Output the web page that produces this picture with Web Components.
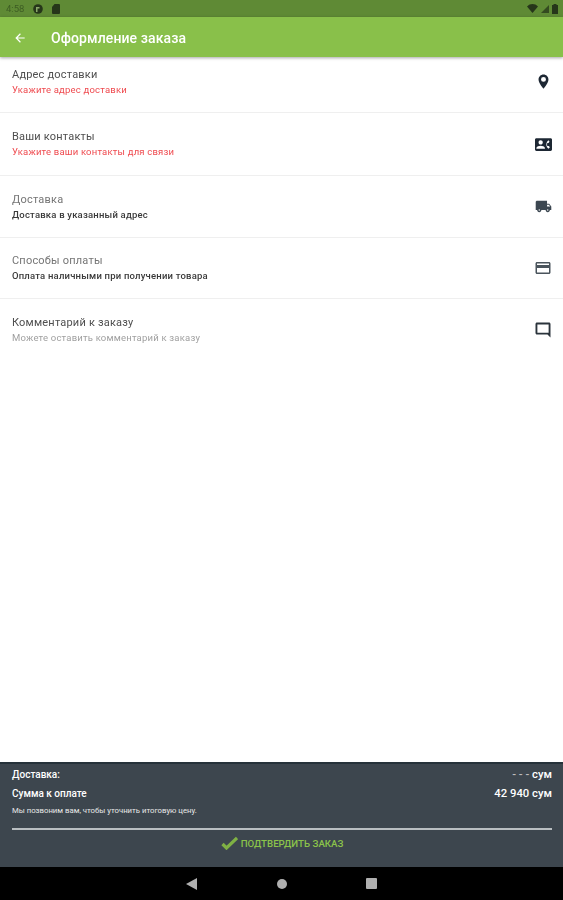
<!DOCTYPE html>
<html lang="ru">
<head>
<meta charset="utf-8">
<title>Оформление заказа</title>
<style>
html,body{margin:0;height:100%;}
body{font-family:Roboto,"Liberation Sans",sans-serif;background:#fff;}
order-screen{height:900px;filter:blur(.5px);}
</style>
</head>
<body>
<order-screen>
  <status-bar slot="status"></status-bar>
  <app-bar slot="bar" title="Оформление заказа"></app-bar>
  <order-row title="Адрес доставки" note="Укажите адрес доставки" kind="error" h="56" first>
    <svg viewBox="0 0 24 24" width="17" height="17"><path fill="#1d2733" d="M12 2C8.100 2 5 5.100 5 9c0 5.200 7 13 7 13s7-7.800 7-13c0-3.900-3.100-7-7-7zm0 10.500a3.500 3.500 0 1 1 0-7 3.500 3.500 0 0 1 0 7z"/></svg>
  </order-row>
  <order-row title="Ваши контакты" note="Укажите ваши контакты для связи" kind="error" h="63">
    <svg viewBox="0 0 24 24" width="17" height="17"><path fill="#1d2733" d="M22 3H2C.9 3 0 3.900 0 5v14c0 1.100.9 2 2 2h20c1.100 0 2-.9 2-2V5c0-1.100-.9-2-2-2zM8 6c1.700 0 3 1.300 3 3s-1.300 3-3 3-3-1.300-3-3 1.300-3 3-3zm6 12H2v-1c0-2 4-3.100 6-3.100s6 1.100 6 3.100v1zm3.900-4h1.600L21 16l-2 2c-1.300-1-2.300-2.400-2.700-4-.2-.6-.3-1.300-.3-2s.1-1.400.3-2c.4-1.600 1.400-3 2.700-4l1.500 2-1.500 2h-1.600c-.2.600-.4 1.300-.4 2s.2 1.400.4 2z"/></svg>
  </order-row>
  <order-row title="Доставка" note="Доставка в указанный адрес" kind="plain" h="62" faded>
    <svg viewBox="0 0 24 24" width="17" height="17"><path fill="#3b4650" d="M20 8h-3V4H3c-1.100 0-2 .9-2 2v11h2c0 1.700 1.300 3 3 3s3-1.300 3-3h6c0 1.700 1.300 3 3 3s3-1.300 3-3h2v-5l-3-4zM6 18a1 1 0 1 1 0-2 1 1 0 0 1 0 2zm13.500-8.500 2 2.500H17V9.500h2.500zM18 18a1 1 0 1 1 0-2 1 1 0 0 1 0 2z"/></svg>
  </order-row>
  <order-row title="Способы оплаты" note="Оплата наличными при получении товара" kind="plain" h="61" faded>
    <svg viewBox="0 0 24 24" width="18" height="18"><path fill="#4a545c" d="M20 4H4c-1.100 0-2 .9-2 2v12c0 1.100.9 2 2 2h16c1.100 0 2-.9 2-2V6c0-1.100-.9-2-2-2zm0 14H4v-6h16v6zm0-10H4V6h16v2z"/></svg>
  </order-row>
  <order-row title="Комментарий к заказу" note="Можете оставить комментарий к заказу" kind="hint" h="62" last>
    <svg viewBox="0 0 24 24" width="18" height="18"><path fill="#2b343c" d="M21.990 4c0-1.100-.89-2-1.990-2H4c-1.100 0-2 .9-2 2v12c0 1.100.9 2 2 2h14l4 4-.01-18zM19.500 4.500v11.100L18.830 15.500H4.500v-11h15z"/></svg>
  </order-row>
  <order-summary slot="summary"></order-summary>
  <nav-bar slot="nav"></nav-bar>
</order-screen>

<script>
class OrderScreen extends HTMLElement{
  constructor(){
    super();
    this.attachShadow({mode:"open"}).innerHTML=`
    <style>
    :host{display:flex;flex-direction:column;}
    main{flex:1;display:flex;flex-direction:column;min-height:0;}
    </style>
    <slot name="status"></slot>
    <slot name="bar"></slot>
    <main><slot></slot></main>
    <slot name="summary"></slot>
    <slot name="nav"></slot>`;
  }
}

class StatusBar extends HTMLElement{
  constructor(){
    super();
    this.attachShadow({mode:"open"}).innerHTML=`
    <style>
    :host{display:flex;align-items:center;height:17px;background:#5f8a35;padding:0 5px 0 6px;color:#2f4a1c;font-size:9.500px;}
    .time{margin-right:9px;opacity:.7;}
    .left{display:flex;align-items:center;gap:0;flex:1;}
    .left svg{margin-right:9px;}
    .right{display:flex;align-items:center;gap:3px;}
    svg{display:block;}
    </style>
    <div class="left">
      <span class="time">4:58</span>
      <svg width="10" height="10" viewBox="0 0 10 10"><circle cx="5" cy="5" r="4.800" fill="#26361a"/><path d="M3 8V3h3.500v1.500H4.500V8z" fill="#8aa86a"/></svg>
      <svg width="8" height="10" viewBox="0 0 8 10"><path d="M2.500 0H7a1 1 0 0 1 1 1v8a1 1 0 0 1-1 1H1a1 1 0 0 1-1-1V3z" fill="#26361a"/></svg>
    </div>
    <div class="right">
      <svg width="11" height="9" viewBox="0 0 11 9"><path d="M0 2.500C3-.8 8-.8 11 2.500L5.500 9z" fill="#26361a"/></svg>
      <svg width="8" height="8" viewBox="0 0 8 8"><path d="M8 0v8H0z" fill="#26361a" opacity=".75"/></svg>
      <svg width="6" height="10" viewBox="0 0 6 10"><path d="M1.500 0h3v1H6v9H0V1h1.500z" fill="#26361a"/></svg>
    </div>`;
  }
}

class AppBar extends HTMLElement{
  constructor(){
    super();
    this.attachShadow({mode:"open"}).innerHTML=`
    <style>
    :host{display:flex;align-items:center;height:40px;background:#89c04a;color:#fff;padding:1px 13px 0;box-sizing:border-box;box-shadow:0 1px 3px rgba(0,0,0,.35);position:relative;z-index:1;}
    svg{display:block;margin-right:24px;}
    h1{margin:0;font-size:14px;font-weight:500;letter-spacing:.1px;}
    </style>
    <svg width="14" height="14" viewBox="0 0 24 24"><path fill="#fff" d="M20 11H7.830l5.590-5.590L12 4l-8 8 8 8 1.410-1.410L7.830 13H20z"/></svg>
    <h1></h1>`;
    this.shadowRoot.querySelector("h1").textContent=this.getAttribute("title");
  }
}

class OrderRow extends HTMLElement{
  constructor(){
    super();
    this.attachShadow({mode:"open"}).innerHTML=`
    <style>
    :host{display:flex;align-items:center;padding:0 10px 0 12px;box-sizing:border-box;border-bottom:1px solid #efefef;}
    :host([first]){padding-bottom:6px;}
    :host([last]){border-bottom:0;}
    .text{flex:1;display:flex;flex-direction:column;gap:3px;}
    .title{font-size:11px;line-height:12px;color:#4f4f4f;letter-spacing:.2px;}
    :host([faded]) .title{color:#757575;}
    .note{font-size:9.500px;line-height:11px;letter-spacing:.2px;}
    .error{color:#ef4a4f;}
    .plain{color:#3a3a3a;font-weight:500;}
    .hint{color:#a0a0a0;}
    .icon{width:20px;display:flex;justify-content:center;}
    ::slotted(svg){display:block;}
    </style>
    <div class="text"><span class="title"></span><span class="note"></span></div>
    <div class="icon"><slot></slot></div>`;
    this.shadowRoot.querySelector(".title").textContent=this.getAttribute("title");
    let note=this.shadowRoot.querySelector(".note");
    note.textContent=this.getAttribute("note");
    note.classList.add(this.getAttribute("kind"));
    this.style.height=this.getAttribute("h")+"px";
  }
}

class OrderSummary extends HTMLElement{
  constructor(){
    super();
    this.attachShadow({mode:"open"}).innerHTML=`
    <style>
    :host{display:flex;flex-direction:column;height:105px;box-sizing:border-box;background:#3d464e;border-top:2px solid #26323a;color:#fff;padding:5px 11px 0 12px;}
    .line{display:flex;justify-content:space-between;align-items:baseline;font-size:10px;font-weight:500;line-height:12px;}
    .line + .line{margin-top:7px;}
    .sum{font-size:11.300px;}
    .dots{color:#bdbdbd;}
    .call{font-size:7.750px;line-height:10px;margin-top:6px;color:#e8e8e8;}
    hr{margin:12px 0 0;border:0;height:2px;background:#b9bec1;}
    .confirm{flex:1;display:flex;align-items:center;justify-content:center;gap:3px;color:#8bc34a;font-size:9.700px;font-weight:500;padding-bottom:11px;}
    svg{display:block;}
    </style>
    <div class="line"><span>Доставка:</span><span class="sum"><span class="dots">- - - </span>сум</span></div>
    <div class="line"><span>Сумма к оплате</span><span class="sum">42 940 сум</span></div>
    <div class="call">Мы позвоним вам, чтобы уточнить итоговую цену.</div>
    <hr>
    <div class="confirm">
      <svg width="17" height="14" viewBox="0 0 17 14"><path d="M1.500 8l4 4L16 2" fill="none" stroke="#7fb144" stroke-width="3.200"/></svg>
      <span>ПОДТВЕРДИТЬ ЗАКАЗ</span>
    </div>`;
  }
}

class NavBar extends HTMLElement{
  constructor(){
    super();
    this.attachShadow({mode:"open"}).innerHTML=`
    <style>
    :host{display:flex;align-items:center;justify-content:center;gap:79px;height:33px;background:#000;}
    svg{display:block;}
    </style>
    <svg width="12" height="12" viewBox="0 0 12 12"><path d="M11 0v12L0 6z" fill="#b0b0b0"/></svg>
    <svg width="10" height="10" viewBox="0 0 10 10"><circle cx="5" cy="5" r="5" fill="#b0b0b0"/></svg>
    <svg width="11" height="11" viewBox="0 0 11 11"><rect width="11" height="11" rx="1" fill="#b0b0b0"/></svg>`;
  }
}

customElements.define("order-screen",OrderScreen);
customElements.define("status-bar",StatusBar);
customElements.define("app-bar",AppBar);
customElements.define("order-row",OrderRow);
customElements.define("order-summary",OrderSummary);
customElements.define("nav-bar",NavBar);
</script>
</body>
</html>
